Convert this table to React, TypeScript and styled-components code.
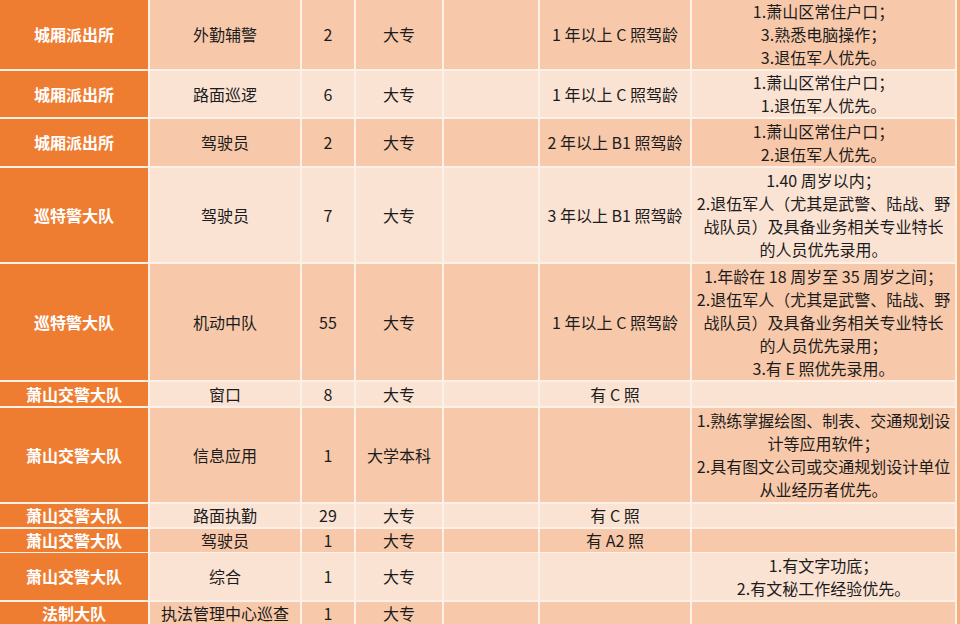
import React from 'react';
import styled, { createGlobalStyle } from 'styled-components';

interface JobRow {
  dept: string;
  post: string;
  count: string;
  edu: string;
  license: string;
  notes: string[];
  height: number;
}

const rows: JobRow[] = [
  {
    dept: '城厢派出所',
    post: '外勤辅警',
    count: '2',
    edu: '大专',
    license: '1 年以上 C 照驾龄',
    notes: ['1.萧山区常住户口；', '3.熟悉电脑操作；', '3.退伍军人优先。'],
    height: 69,
  },
  {
    dept: '城厢派出所',
    post: '路面巡逻',
    count: '6',
    edu: '大专',
    license: '1 年以上 C 照驾龄',
    notes: ['1.萧山区常住户口；', '1.退伍军人优先。'],
    height: 46,
  },
  {
    dept: '城厢派出所',
    post: '驾驶员',
    count: '2',
    edu: '大专',
    license: '2 年以上 B1 照驾龄',
    notes: ['1.萧山区常住户口；', '2.退伍军人优先。'],
    height: 47,
  },
  {
    dept: '巡特警大队',
    post: '驾驶员',
    count: '7',
    edu: '大专',
    license: '3 年以上 B1 照驾龄',
    notes: [
      '1.40 周岁以内；',
      '2.退伍军人（尤其是武警、陆战、野',
      '战队员）及具备业务相关专业特长',
      '的人员优先录用。',
    ],
    height: 94,
  },
  {
    dept: '巡特警大队',
    post: '机动中队',
    count: '55',
    edu: '大专',
    license: '1 年以上 C 照驾龄',
    notes: [
      '1.年龄在 18 周岁至 35 周岁之间；',
      '2.退伍军人（尤其是武警、陆战、野',
      '战队员）及具备业务相关专业特长',
      '的人员优先录用；',
      '3.有 E 照优先录用。',
    ],
    height: 116,
  },
  {
    dept: '萧山交警大队',
    post: '窗口',
    count: '8',
    edu: '大专',
    license: '有 C 照',
    notes: [],
    height: 24,
  },
  {
    dept: '萧山交警大队',
    post: '信息应用',
    count: '1',
    edu: '大学本科',
    license: '',
    notes: [
      '1.熟练掌握绘图、制表、交通规划设',
      '计等应用软件；',
      '2.具有图文公司或交通规划设计单位',
      '从业经历者优先。',
    ],
    height: 94,
  },
  {
    dept: '萧山交警大队',
    post: '路面执勤',
    count: '29',
    edu: '大专',
    license: '有 C 照',
    notes: [],
    height: 23,
  },
  {
    dept: '萧山交警大队',
    post: '驾驶员',
    count: '1',
    edu: '大专',
    license: '有 A2 照',
    notes: [],
    height: 22,
  },
  {
    dept: '萧山交警大队',
    post: '综合',
    count: '1',
    edu: '大专',
    license: '',
    notes: ['1.有文字功底；', '2.有文秘工作经验优先。'],
    height: 47,
  },
  {
    dept: '法制大队',
    post: '执法管理中心巡查',
    count: '1',
    edu: '大专',
    license: '',
    notes: [],
    height: 22,
  },
];

export default function App() {
  return (
    <>
      <GlobalStyle />
      <Table>
        {rows.map((row, i) => {
          const tone = i % 2 === 0 ? 'dark' : 'light';
          return (
            <Row key={i} $height={row.height}>
              <DeptCell>{row.dept}</DeptCell>
              <Cell $tone={tone}>{row.post}</Cell>
              <Cell $tone={tone}>{row.count}</Cell>
              <Cell $tone={tone}>{row.edu}</Cell>
              <Cell $tone={tone} />
              <Cell $tone={tone}>{row.license}</Cell>
              <Cell $tone={tone}>
                {row.notes.map((line, j) => (
                  <NoteLine key={j}>{line}</NoteLine>
                ))}
              </Cell>
            </Row>
          );
        })}
      </Table>
    </>
  );
}

const GlobalStyle = createGlobalStyle`
  html, body {
    margin: 0;
    padding: 0;
    background: #ffffff;
    overflow: hidden;
  }
  body {
    font-family: "Noto Sans CJK SC", "Noto Sans", sans-serif;
  }
`;

const Table = styled.div`
  display: flex;
  flex-direction: column;
  gap: 2px;
  width: 960px;
  height: 624px;
  box-sizing: border-box;
  padding-right: 2px;
  background-color: #fdf0e6;
  border-right: 3px solid #f3ad7f;
  overflow: hidden;
`;

const Row = styled.div<{ $height: number }>`
  display: grid;
  grid-template-columns: 148px 150px 52px 86px 94px 150px 263px;
  column-gap: 2px;
  flex: 0 0 ${(p) => p.$height}px;
  height: ${(p) => p.$height}px;

  &:last-child {
    flex: 1 0 ${(p) => p.$height}px;
  }
`;

const Cell = styled.div<{ $tone: 'dark' | 'light' }>`
  display: flex;
  flex-direction: column;
  align-items: center;
  justify-content: center;
  text-align: center;
  white-space: nowrap;
  font-size: 16px;
  line-height: 23px;
  color: #1c1c1c;
  background-color: ${(p) => (p.$tone === 'dark' ? '#f7c9aa' : '#fbe3d4')};
`;

const DeptCell = styled.div`
  display: flex;
  align-items: center;
  justify-content: center;
  white-space: nowrap;
  font-size: 16px;
  font-weight: 700;
  line-height: 23px;
  color: #ffffff;
  background-color: #ee7d32;
`;

const NoteLine = styled.div`
  white-space: nowrap;
`;
